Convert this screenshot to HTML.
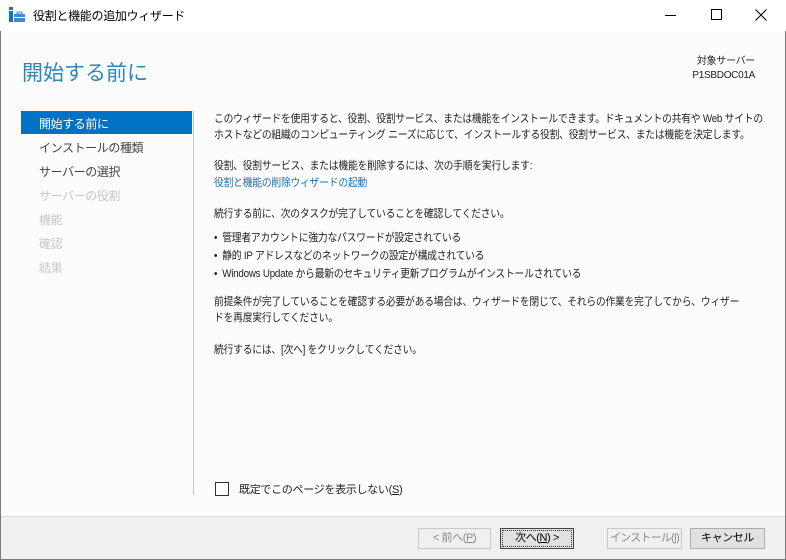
<!DOCTYPE html>
<html><head><meta charset="utf-8"><style>
*{margin:0;padding:0;box-sizing:border-box}
body{width:786px;height:560px;overflow:hidden;font-family:"Liberation Sans","Noto Sans CJK JP",sans-serif;background:#fff;position:relative;color:#1e1e1e}
.win{position:absolute;left:0;top:0;width:786px;height:560px;border:1px solid #7a7a7a;border-top:none;background:#fcfcfc}
.tb{position:absolute;left:0;top:0;width:786px;height:31px;background:#fff}
.t{position:absolute;white-space:nowrap}
.l{position:absolute;left:214px;font-size:11px;letter-spacing:-0.25px;white-space:nowrap;color:#1e1e1e;transform:scaleX(0.89);transform-origin:0 0}
.nav{position:absolute;left:39px;font-size:12px;letter-spacing:-0.4px;white-space:nowrap}
.btn{position:absolute;top:528px;height:21px;border:1px solid #adadad;background:#e1e1e1;font-size:11px;text-align:center;line-height:19px;white-space:nowrap;letter-spacing:-0.4px;overflow:hidden}
</style></head><body>
<div class="win"></div>
<div class="tb"></div>
<svg style="position:absolute;left:9px;top:7px" width="16" height="16" viewBox="0 0 16 16"><rect x="0" y="0" width="4" height="3" fill="#1f6fb5"/><rect x="0" y="4" width="4" height="11" fill="#1f6fb5"/><rect x="5" y="7" width="11" height="8" fill="#3c8ccf"/><rect x="8" y="5" width="5" height="2" fill="none" stroke="#3c8ccf"/><rect x="5" y="10" width="11" height="1" fill="#fff"/></svg>
<div class="t" style="left:33px;top:7px;font-size:12px;color:#000;letter-spacing:-0.3px">役割と機能の追加ウィザード</div>
<div style="position:absolute;left:665px;top:15px;width:11px;height:1px;background:#000"></div>
<div style="position:absolute;left:711px;top:9px;width:11px;height:11px;border:1px solid #000"></div>
<svg style="position:absolute;left:755px;top:9px" width="12" height="12"><path d="M0.5 0.5L11.5 11.5M11.5 0.5L0.5 11.5" stroke="#000" stroke-width="1"/></svg>
<div class="t" style="left:22px;top:57px;font-size:21px;color:#2f87b7;letter-spacing:0px">開始する前に</div>
<div class="t" style="right:31px;top:55px;font-size:10px;text-align:right;line-height:14px;color:#1e1e1e;letter-spacing:-0.3px">対象サーバー<br>P1SBDOC01A</div>
<div style="position:absolute;left:21px;top:111px;width:171px;height:23px;background:#0072c6"></div>
<div style="position:absolute;left:193px;top:111px;width:1px;height:384px;background:#c8c8c8"></div>
<div class="nav" style="top:115px;color:#fff">開始する前に</div>
<div class="nav" style="top:139px;color:#444">インストールの種類</div>
<div class="nav" style="top:163px;color:#444">サーバーの選択</div>
<div class="nav" style="top:187px;color:#c8c8c8">サーバーの役割</div>
<div class="nav" style="top:211px;color:#c8c8c8">機能</div>
<div class="nav" style="top:235px;color:#c8c8c8">確認</div>
<div class="nav" style="top:259px;color:#c8c8c8">結果</div>
<div class="l" style="top:110px">このウィザードを使用すると、役割、役割サービス、または機能をインストールできます。ドキュメントの共有や Web サイトの</div>
<div class="l" style="top:126px">ホストなどの組織のコンピューティング ニーズに応じて、インストールする役割、役割サービス、または機能を決定します。</div>
<div class="l" style="top:157px">役割、役割サービス、または機能を削除するには、次の手順を実行します:</div>
<div class="l" style="top:174px;color:#1a6fb0">役割と機能の削除ウィザードの起動</div>
<div class="l" style="top:205px">続行する前に、次のタスクが完了していることを確認してください。</div>
<div class="l" style="top:229px">•&nbsp; 管理者アカウントに強力なパスワードが設定されている</div>
<div class="l" style="top:247px">•&nbsp; 静的 IP アドレスなどのネットワークの設定が構成されている</div>
<div class="l" style="top:265px">•&nbsp; Windows Update から最新のセキュリティ更新プログラムがインストールされている</div>
<div class="l" style="top:293px">前提条件が完了していることを確認する必要がある場合は、ウィザードを閉じて、それらの作業を完了してから、ウィザー</div>
<div class="l" style="top:309px">ドを再度実行してください。</div>
<div class="l" style="top:341px">続行するには、[次へ] をクリックしてください。</div>
<div style="position:absolute;left:215px;top:482px;width:14px;height:14px;border:1px solid #333;background:#fff"></div>
<div class="t" style="left:239px;top:481px;font-size:11px;letter-spacing:-0.3px">既定でこのページを表示しない(<u>S</u>)</div>
<div style="position:absolute;left:1px;top:516px;width:784px;height:43px;background:#f0f0f0;border-top:1px solid #dcdcdc"></div>
<div class="btn" style="left:418px;width:73px;color:#888;background:#f0f0f0;border-color:#c8c8c8">&lt; 前へ(<u>P</u>)</div>
<div class="btn" style="left:500px;width:74px;border:1px solid #444;color:#000"><div style="position:absolute;inset:1px;border:1px dotted #333"></div>次へ(<u>N</u>) &gt;</div>
<div class="btn" style="left:607px;width:75px;color:#888;background:#f0f0f0;border-color:#c8c8c8;letter-spacing:-0.8px">インストール(<u>I</u>)</div>
<div class="btn" style="left:690px;width:75px;color:#000">キャンセル</div>
</body></html>
